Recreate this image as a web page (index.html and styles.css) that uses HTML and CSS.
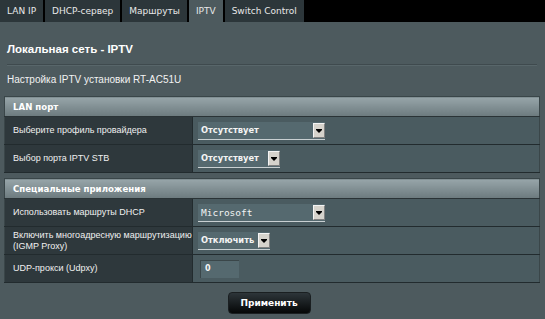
FILE: index.html
```html
<!DOCTYPE html>
<html lang="ru">
<head>
<meta charset="utf-8">
<title>IPTV</title>
<link rel="stylesheet" href="styles.css">
</head>
<body>
<div class="tabs">
  <div class="tab">LAN IP</div>
  <div class="tab">DHCP-сервер</div>
  <div class="tab">Маршруты</div>
  <div class="tab active">IPTV</div>
  <div class="tab">Switch Control</div>
</div>
<div class="content">
  <div class="title">Локальная сеть - IPTV</div>
  <div class="divider"></div>
  <div class="desc">Настройка IPTV установки RT-AC51U</div>

  <table class="ftable">
    <tr class="head"><td colspan="2">LAN порт</td></tr>
    <tr class="row">
      <th>Выберите профиль провайдера</th>
      <td><div class="sel w-long"><span>Отсутствует</span><i class="arrow"></i></div></td>
    </tr>
    <tr class="row">
      <th>Выбор порта IPTV STB</th>
      <td><div class="sel w-mid"><span>Отсутствует</span><i class="arrow"></i></div></td>
    </tr>
  </table>

  <table class="ftable second">
    <tr class="head"><td colspan="2">Специальные приложения</td></tr>
    <tr class="row">
      <th>Использовать маршруты DHCP</th>
      <td><div class="sel w-long mono"><span>Microsoft</span><i class="arrow"></i></div></td>
    </tr>
    <tr class="row">
      <th><span class="nowrap">Включить многоадресную маршрутизацию</span><br>(IGMP Proxy)</th>
      <td><div class="sel w-short"><span>Отключить</span><i class="arrow"></i></div></td>
    </tr>
    <tr class="row">
      <th>UDP-прокси (Udpxy)</th>
      <td><div class="inp">0</div></td>
    </tr>
  </table>

  <div class="actions"><button class="apply">Применить</button></div>
</div>
</body>
</html>
```

FILE: styles.css
```css
html, body {
  margin: 0;
  padding: 0;
  background: #4d5a5e;
  width: 545px;
  height: 319px;
  overflow: hidden;
}
body {
  font-family: "Liberation Sans", Arial, sans-serif;
  color: #ffffff;
}
.tabs {
  display: flex;
  gap: 2px;
  height: 22px;
  background: #000000;
}
.tab {
  background: #2c363a;
  color: #e8e8e8;
  font-family: "DejaVu Sans", Verdana, sans-serif;
  font-size: 9px;
  line-height: 22px;
  padding: 0 7px;
  white-space: nowrap;
}
.tab.active {
  background: #4d5a5e;
}
.content {
  padding: 20px 5px 0 4px;
}
.title {
  font-weight: bold;
  font-size: 11.5px;
  line-height: 14px;
  margin-left: 3px;
  color: #ffffff;
}
.divider {
  margin: 8px 3px 0 3px;
  border-top: 1px solid #3f4a4e;
  border-bottom: 1px solid #58666a;
}
.desc {
  font-size: 10px;
  line-height: 14px;
  margin: 7px 0 0 3px;
  color: #f2f2f2;
}
.ftable {
  width: 536px;
  margin-top: 9px;
  border-collapse: collapse;
  border: 1px solid #3a4649;
}
.ftable.second {
  margin-top: 5px;
}
.ftable .head {
  height: 20px;
}
.ftable .row {
  height: 28px;
}
.ftable .head td {
  padding: 0 0 0 8px;
  background: linear-gradient(#97a5a9, #6c7a7e);
  font-family: "DejaVu Sans", Verdana, sans-serif;
  font-weight: bold;
  font-size: 8.6px;
  color: #ffffff;
  border-bottom: 1px solid #2a3336;
}
.ftable th {
  width: 179px;
  padding: 0 0 0 8px;
  text-align: left;
  font-weight: normal;
  font-size: 9px;
  line-height: 11px;
  background: #2e383c;
  color: #f0f0f0;
  border-bottom: 1px solid #222b2e;
  border-right: 1px solid #222b2e;
}
.nowrap {
  white-space: nowrap;
}
.ftable td {
  background: #4a5b60;
  padding: 0 0 0 5px;
  border-bottom: 1px solid #222b2e;
}
.sel {
  display: flex;
  align-items: center;
  height: 17px;
  background: #55696f;
  border-bottom: 1px solid #c9d0d2;
}
.sel span {
  flex: 1;
  font-family: "DejaVu Sans", Verdana, sans-serif;
  font-weight: bold;
  font-size: 8.3px;
  color: #f4f4f4;
  padding-left: 3px;
  white-space: nowrap;
}
.sel.mono span {
  font-family: "DejaVu Sans Mono", "Liberation Mono", monospace;
  font-weight: normal;
  font-size: 9.5px;
  color: #f2f4f4;
}
.w-long { width: 127px; }
.w-mid { width: 82px; }
.w-short { width: 72px; }
.arrow {
  display: block;
  width: 12px;
  height: 15px;
  box-sizing: border-box;
  background: #d6d3cc;
  border: 1px solid #f4f4f4;
  border-right-color: #808080;
  border-bottom-color: #808080;
  position: relative;
}
.arrow::after {
  content: "";
  position: absolute;
  left: 2px;
  top: 6px;
  border-left: 3px solid transparent;
  border-right: 3px solid transparent;
  border-top: 3px solid #000000;
}
.arrow::before {
  content: "";
  position: absolute;
  left: 2px;
  top: 5px;
  width: 6px;
  height: 1px;
  background: #000000;
}
.inp {
  width: 39px;
  height: 18px;
  margin-left: 2px;
  box-sizing: border-box;
  background: #55696f;
  border-top: 1px solid #3a4649;
  border-left: 1px solid #3a4649;
  font-family: "DejaVu Sans", Verdana, sans-serif;
  font-weight: bold;
  font-size: 8px;
  line-height: 16px;
  padding-left: 4px;
  color: #f4f4f4;
}
.actions {
  display: flex;
  justify-content: center;
  margin-top: 9px;
  padding-right: 6px;
}
.apply {
  width: 83px;
  height: 22px;
  border: 1px solid #1a1f21;
  border-radius: 4px;
  background: linear-gradient(#2d3539, #050707);
  color: #ffffff;
  font-family: "DejaVu Sans", Verdana, sans-serif;
  font-weight: bold;
  font-size: 9px;
  cursor: pointer;
}
```
